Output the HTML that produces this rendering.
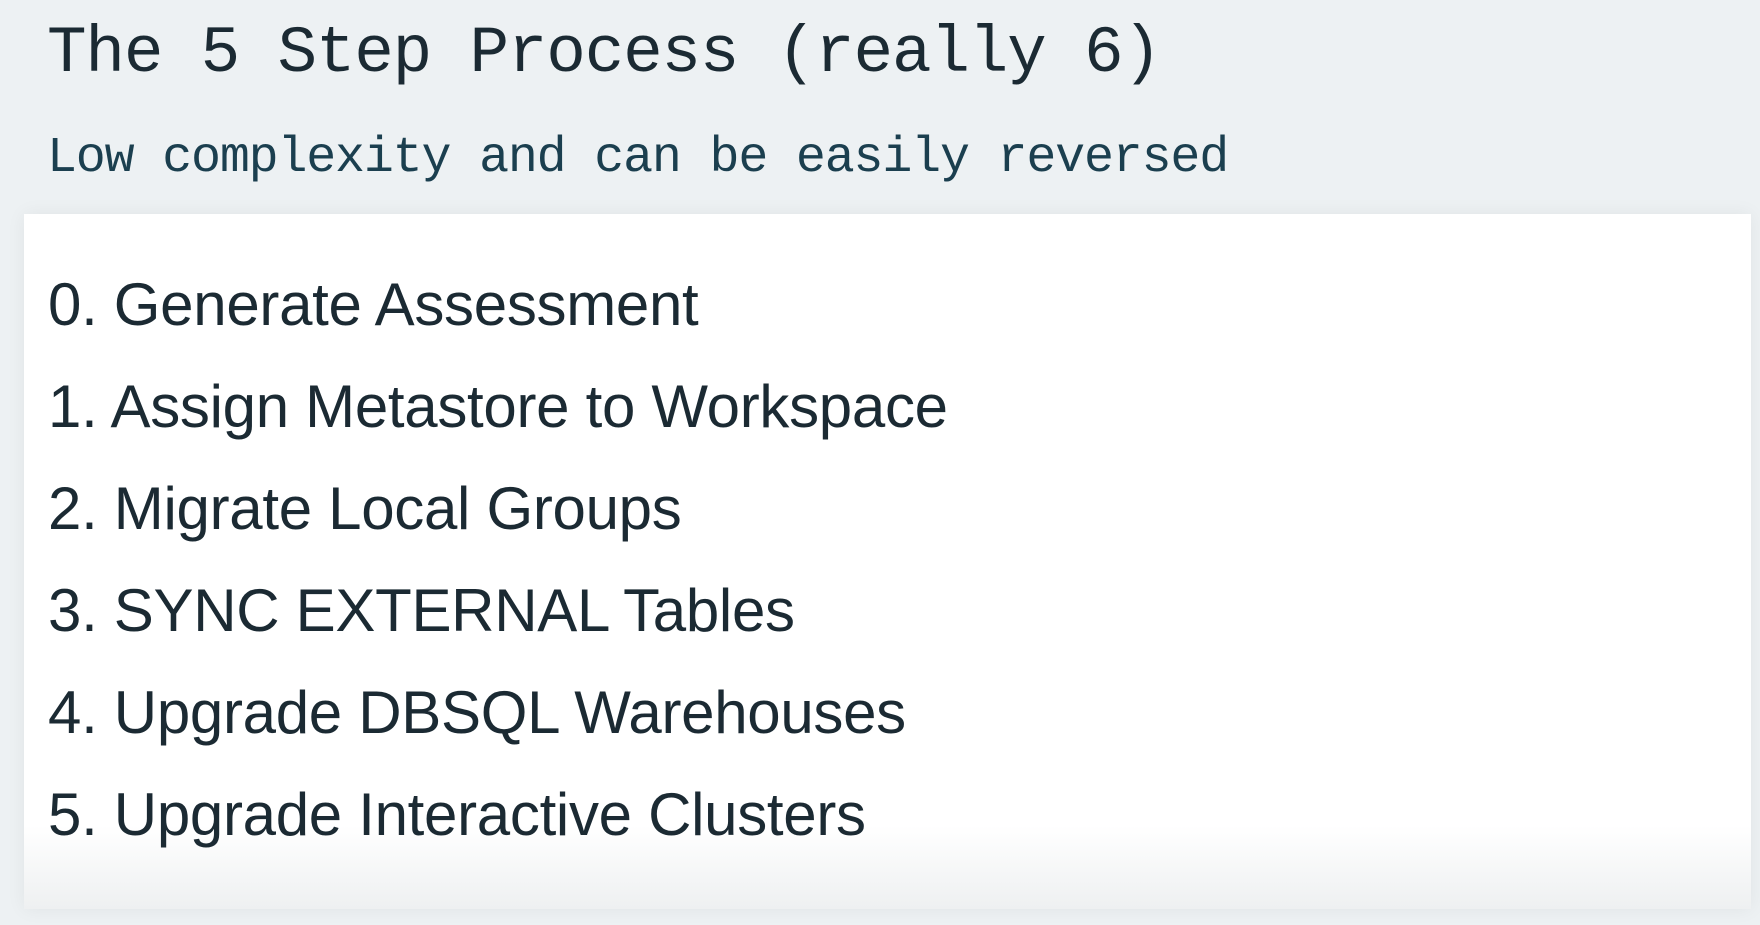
<!DOCTYPE html>
<html><head><meta charset="utf-8"><style>
html,body{margin:0;padding:0}
body{width:1760px;height:925px;background:#edf1f3;position:relative;overflow:hidden;font-family:"Liberation Sans",sans-serif}
.t{position:absolute;left:47px;top:14px;font-family:"Liberation Mono",monospace;font-size:66px;letter-spacing:-1.2px;color:#1b2a33;line-height:80px;white-space:nowrap}
.s{position:absolute;left:47px;top:127px;font-family:"Liberation Mono",monospace;font-size:50px;letter-spacing:-1.2px;color:#1b3f4f;line-height:64px;white-space:nowrap}
.p{position:absolute;left:24px;top:214px;width:1727px;height:695px;background:linear-gradient(#fff 0,#fff 88%,#eef0f1 100%);box-shadow:0 0 18px rgba(0,0,0,0.06)}
.i{position:absolute;left:48px;font-size:60px;color:#1b2a33;line-height:60px;white-space:nowrap;letter-spacing:-0.3px}
</style></head><body>
<div class="t">The 5 Step Process (really 6)</div>
<div class="s">Low complexity and can be easily reversed</div>
<div class="p"></div>
<div class="i" style="top:275px">0. Generate Assessment</div>
<div class="i" style="top:377px">1. Assign Metastore to Workspace</div>
<div class="i" style="top:479px">2. Migrate Local Groups</div>
<div class="i" style="top:581px">3. SYNC EXTERNAL Tables</div>
<div class="i" style="top:683px">4. Upgrade DBSQL Warehouses</div>
<div class="i" style="top:785px">5. Upgrade Interactive Clusters</div>
</body></html>
